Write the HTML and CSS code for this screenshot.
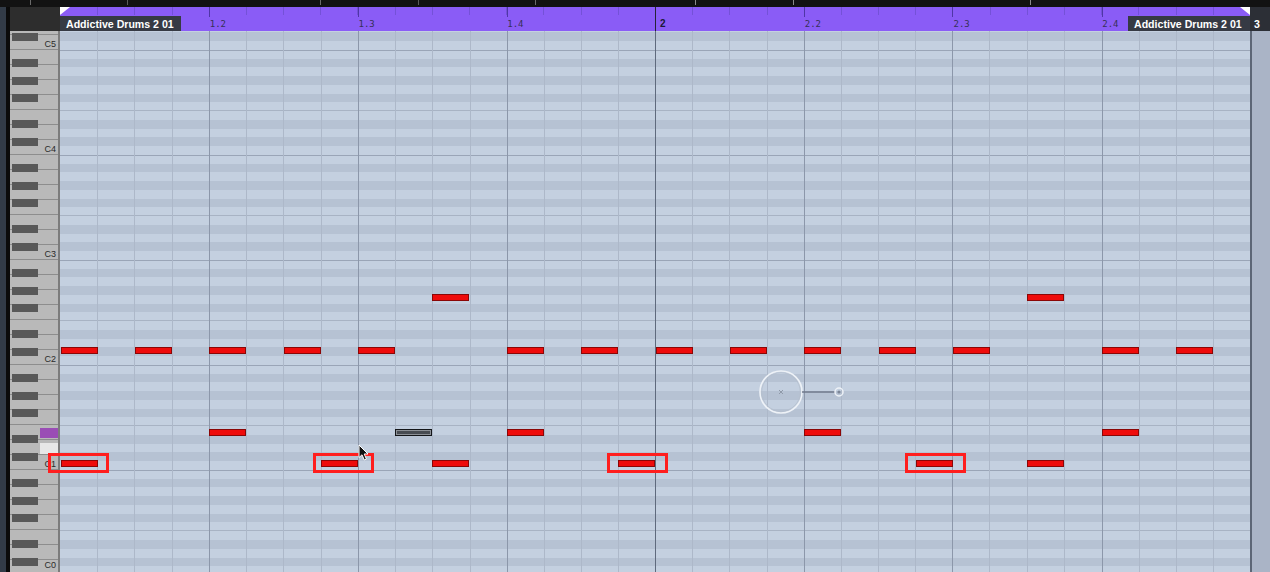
FILE: index.html
```html
<!DOCTYPE html>
<html>
<head>
<meta charset="utf-8">
<title>Key Editor</title>
<link rel="stylesheet" href="styles.css">
</head>
<body>
<div class="app">
  <div class="topstrip"></div>
  <div class="main">
    <div class="edge"></div>
    <div class="keycol">
      <div class="corner"></div>
      <div class="keyboard">
        <div class="oct top"><span>C5</span></div>
        <div class="oct"><span>C4</span></div>
        <div class="oct"><span>C3</span></div>
        <div class="oct"><span>C2</span></div>
        <div class="oct"><span>C1</span></div>
        <div class="oct last"><span>C0</span></div>
        <div class="key-hl purple"></div>
        <div class="key-hl white"></div>
      </div>
    </div>
    <div class="editor">
      <div class="ruler">
        <span class="tri tri-l"></span>
        <span class="tri tri-r"></span>
        <div class="beat first"><span class="part">Addictive Drums 2 01</span></div>
        <div class="beat">1.2</div>
        <div class="beat">1.3</div>
        <div class="beat">1.4</div>
        <div class="beat bar">2</div>
        <div class="beat">2.2</div>
        <div class="beat">2.3</div>
        <div class="beat">2.4</div>
        <span class="part part-r">Addictive Drums 2 01</span>
      </div>
      <div class="grid">
        <!-- C#2 row -->
        <div class="note rA" style="--k:0"></div>
        <div class="note rA" style="--k:2"></div>
        <div class="note rA" style="--k:4"></div>
        <div class="note rA" style="--k:6"></div>
        <div class="note rA" style="--k:8"></div>
        <div class="note rA" style="--k:12"></div>
        <div class="note rA" style="--k:14"></div>
        <div class="note rA" style="--k:16"></div>
        <div class="note rA" style="--k:18"></div>
        <div class="note rA" style="--k:20"></div>
        <div class="note rA" style="--k:22"></div>
        <div class="note rA" style="--k:24"></div>
        <div class="note rA" style="--k:28"></div>
        <div class="note rA" style="--k:30"></div>
        <!-- upper row -->
        <div class="note rB" style="--k:10"></div>
        <div class="note rB" style="--k:26"></div>
        <!-- snare row -->
        <div class="note rC" style="--k:4"></div>
        <div class="note rC" style="--k:12"></div>
        <div class="note rC" style="--k:20"></div>
        <div class="note rC" style="--k:28"></div>
        <div class="note rC muted" style="--k:9"></div>
        <!-- kick row -->
        <div class="note rD" style="--k:0"></div>
        <div class="note rD" style="--k:7"></div>
        <div class="note rD" style="--k:10"></div>
        <div class="note rD" style="--k:15"></div>
        <div class="note rD" style="--k:23"></div>
        <div class="note rD" style="--k:26"></div>
        <!-- annotation boxes -->
        <div class="mark" style="--x:-12px"></div>
        <div class="mark" style="--x:253px"></div>
        <div class="mark" style="--x:547px"></div>
        <div class="mark" style="--x:845px"></div>
        <!-- pointer -->
        <svg class="pointer" width="12" height="18" viewBox="0 0 12 18">
          <path d="M1 1 L1 13.5 L4 10.8 L6.3 16 L8.4 15 L6.2 10 L10 10 Z" fill="#111" stroke="#fff" stroke-width="1" stroke-linejoin="round"/>
        </svg>
        <!-- line tool cursor -->
        <svg class="linetool" width="90" height="46" viewBox="0 0 90 46">
          <circle cx="23" cy="23" r="21" fill="none" stroke="#eef2f7" stroke-width="1.6"/>
          <circle cx="23" cy="23" r="19.3" fill="none" stroke="#b5bfcd" stroke-width="0.8"/>
          <path d="M21 21 L25 25 M25 21 L21 25" stroke="#8f99a8" stroke-width="1"/>
          <line x1="44" y1="23" x2="77" y2="23" stroke="#6f798b" stroke-width="1.3"/>
          <circle cx="81" cy="23" r="4" fill="none" stroke="#eef2f7" stroke-width="1.5"/>
          <circle cx="81" cy="23" r="1.6" fill="#7b8597"/>
        </svg>
      </div>
    </div>
    <div class="rcol">
      <div class="rruler">3</div>
      <div class="rgrid"></div>
    </div>
  </div>
</div>
</body>
</html>
```

FILE: styles.css
```css
* { box-sizing: border-box; }
html, body { margin: 0; padding: 0; background: #121212; }
body {
  width: 1270px;
  height: 572px;
  overflow: hidden;
  font-family: "Liberation Sans", Arial, sans-serif;
}
.app {
  display: flex;
  flex-direction: column;
  width: 1270px;
  height: 572px;
}
.topstrip {
  height: 7px;
  flex: none;
  background-color: #121212;
  background-image: linear-gradient(to right,
    transparent 0 30px, #6a6a6a 30px 31px,
    transparent 31px 127px, #5a5a5a 127px 128px,
    transparent 128px 320px, #6a6a6a 320px 321px,
    transparent 321px 418px, #5a5a5a 418px 419px,
    transparent 419px 535px, #6a6a6a 535px 536px,
    transparent 536px 695px, #8a8a8a 695px 696px,
    transparent 696px 793px, #8a8a8a 793px 794px,
    transparent 794px 1030px, #8a8a8a 1030px 1031px,
    transparent 1031px);
  background-size: 100% 5px;
  background-repeat: no-repeat;
}
.main {
  display: flex;
  flex: 1;
  min-height: 0;
}
.edge {
  width: 10px;
  flex: none;
  background: linear-gradient(to right, #323b47 0 6px, #0b0b0b 6px 10px);
}
.keycol {
  width: 50px;
  flex: none;
  display: flex;
  flex-direction: column;
}
.corner {
  height: 24px;
  flex: none;
  background: #2d2d2d;
}
.keyboard {
  flex: 1;
  min-height: 0;
  position: relative;
  overflow: hidden;
  display: flex;
  flex-direction: column;
  background: #b9b9b9;
  border-right: 2px solid #7c7c7c;
}
.oct {
  height: 105px;
  flex: none;
  display: flex;
  flex-direction: column;
  justify-content: flex-end;
  align-items: flex-end;
  background-image:
    linear-gradient(to bottom,
      transparent 0 9.25px, #585858 9.25px 17.25px,
      transparent 17.25px 26.75px, #585858 26.75px 34.75px,
      transparent 34.75px 44.25px, #585858 44.25px 52.25px,
      transparent 52.25px 70.5px, #585858 70.5px 78.5px,
      transparent 78.5px 88px, #585858 88px 96px,
      transparent 96px 105px),
    repeating-linear-gradient(to bottom, transparent 0 14px, #8d8d8d 14px 15px);
  background-size: 26px 105px, 100% 105px;
  background-position: 2px 100%, 0 100%;
  background-repeat: no-repeat;
}
.oct.top { height: 19px; }
.oct span {
  font-size: 9px;
  line-height: 9px;
  color: #2a2a2a;
  padding-right: 2px;
  margin-bottom: 1px;
}
.oct.last span { margin-bottom: 5px; }
.key-hl {
  position: absolute;
  left: 30px;
  width: 18px;
}
.key-hl.purple { top: 397px; height: 10px; background: #9a4db5; }
.key-hl.white { top: 412px; height: 11px; background: #e7e7e7; }

.editor {
  width: 1190px;
  flex: none;
  display: flex;
  flex-direction: column;
}
.ruler {
  height: 24px;
  flex: none;
  position: relative;
  display: flex;
  background-color: #8a5cf6;
  background-image:
    linear-gradient(to right, transparent 0 595px, #262236 595px 596px, transparent 596px),
    linear-gradient(to right,
      transparent 0 149px, #4f36a6 149px 150px, transparent 150px 298px, #4f36a6 298px 299px,
      transparent 299px 447px, #4f36a6 447px 448px, transparent 448px 744px, #4f36a6 744px 745px,
      transparent 745px 892px, #4f36a6 892px 893px, transparent 893px 1042px, #4f36a6 1042px 1043px,
      transparent 1043px),
    repeating-linear-gradient(to right, #7451d8 0 1px, transparent 1px 37.1875px);
  background-size: 100% 100%, 100% 10px, 100% 8px;
  background-repeat: no-repeat;
}
.beat {
  width: 148.75px;
  flex: none;
  padding: 13px 0 0 1px;
  font-family: "DejaVu Sans Mono", "Liberation Mono", monospace;
  font-size: 9px;
  line-height: 9px;
  color: #363057;
}
.beat.first { padding: 9px 0 0 0; }
.beat.bar {
  padding: 12px 0 0 5px;
  font-family: "Liberation Sans", Arial, sans-serif;
  font-weight: bold;
  font-size: 10px;
  line-height: 10px;
  color: #1b1838;
}
.part {
  display: inline-block;
  height: 15px;
  width: 121px;
  padding: 2px 0 0 6px;
  background: #363a44;
  color: #ffffff;
  font-family: "Liberation Sans", Arial, sans-serif;
  font-weight: bold;
  font-size: 10.6px;
  line-height: 12px;
  white-space: nowrap;
}
.part-r {
  position: absolute;
  right: 0;
  top: 9px;
  width: 122px;
}
.tri {
  position: absolute;
  top: 0;
  width: 0;
  height: 0;
  border-top: 8px solid #ffffff;
}
.tri-l { left: 0; border-right: 10px solid transparent; }
.tri-r { right: 0; border-left: 10px solid transparent; }

.grid {
  --beat: #8c97aa;
  --six: #adb8c9;
  flex: 1;
  min-height: 0;
  position: relative;
  background-color: #c4d0e0;
  background-image:
    linear-gradient(to right, transparent 0 595px, #5f6a7d 595px 596px, transparent 596px),
    linear-gradient(to right,
      transparent 0 149px, var(--beat) 149px 150px, transparent 150px 298px, var(--beat) 298px 299px,
      transparent 299px 447px, var(--beat) 447px 448px, transparent 448px 744px, var(--beat) 744px 745px,
      transparent 745px 892px, var(--beat) 892px 893px, transparent 893px 1042px, var(--beat) 1042px 1043px,
      transparent 1043px),
    linear-gradient(to right,
      transparent 0 37px, var(--six) 37px 38px, transparent 38px 74px, var(--six) 74px 75px,
      transparent 75px 112px, var(--six) 112px 113px, transparent 113px 186px, var(--six) 186px 187px,
      transparent 187px 223px, var(--six) 223px 224px, transparent 224px 261px, var(--six) 261px 262px,
      transparent 262px 335px, var(--six) 335px 336px, transparent 336px 372px, var(--six) 372px 373px,
      transparent 373px 410px, var(--six) 410px 411px, transparent 411px 484px, var(--six) 484px 485px,
      transparent 485px 521px, var(--six) 521px 522px, transparent 522px 558px, var(--six) 558px 559px,
      transparent 559px 632px, var(--six) 632px 633px, transparent 633px 669px, var(--six) 669px 670px,
      transparent 670px 707px, var(--six) 707px 708px, transparent 708px 781px, var(--six) 781px 782px,
      transparent 782px 818px, var(--six) 818px 819px, transparent 819px 855px, var(--six) 855px 856px,
      transparent 856px 929px, var(--six) 929px 930px, transparent 930px 967px, var(--six) 967px 968px,
      transparent 968px 1004px, var(--six) 1004px 1005px, transparent 1005px 1079px, var(--six) 1079px 1080px,
      transparent 1080px 1116px, var(--six) 1116px 1117px, transparent 1117px 1153px, var(--six) 1153px 1154px,
      transparent 1154px),
    repeating-linear-gradient(to bottom,
      #c4d0e0 0 1.5px, #b6c2d3 1.5px 10.25px, #c4d0e0 10.25px 19px,
      #9aa5b7 19px 20px, #c4d0e0 20px 27.75px, #b6c2d3 27.75px 36.5px,
      #c4d0e0 36.5px 45.25px, #b6c2d3 45.25px 54px, #c4d0e0 54px 62.75px,
      #b6c2d3 62.75px 71.5px, #c4d0e0 71.5px 79px, #a8b3c4 79px 80px,
      #c4d0e0 80px 89px, #b6c2d3 89px 97.75px, #c4d0e0 97.75px 105px);
}
.note {
  position: absolute;
  left: calc(var(--k) * 37.1875px + 0.5px);
  width: 37px;
  height: 7px;
  background: #ee0b0b;
  border: 1px solid #8a0606;
}
.rA { top: 316px; }
.rB { top: 263px; }
.rC { top: 398px; }
.rD { top: 429px; }
.note.muted {
  background: #474b51;
  border: 1px solid #141619;
  box-shadow: inset 0 0 0 1px #8c9096;
}
.mark {
  position: absolute;
  left: var(--x);
  top: 422px;
  width: 61px;
  height: 20px;
  border: 3px solid #ff1e1e;
}
.pointer {
  position: absolute;
  left: 298px;
  top: 413px;
}
.linetool {
  position: absolute;
  left: 698px;
  top: 338px;
}
.rcol {
  width: 20px;
  flex: none;
  display: flex;
  flex-direction: column;
}
.rruler {
  height: 24px;
  flex: none;
  background: #2c2f36;
  color: #ffffff;
  font-weight: bold;
  font-size: 10.6px;
  line-height: 12px;
  padding: 11px 0 0 4px;
}
.rgrid {
  flex: 1;
  background: #aab4c6;
  border-left: 2px solid #5d6676;
}
```
